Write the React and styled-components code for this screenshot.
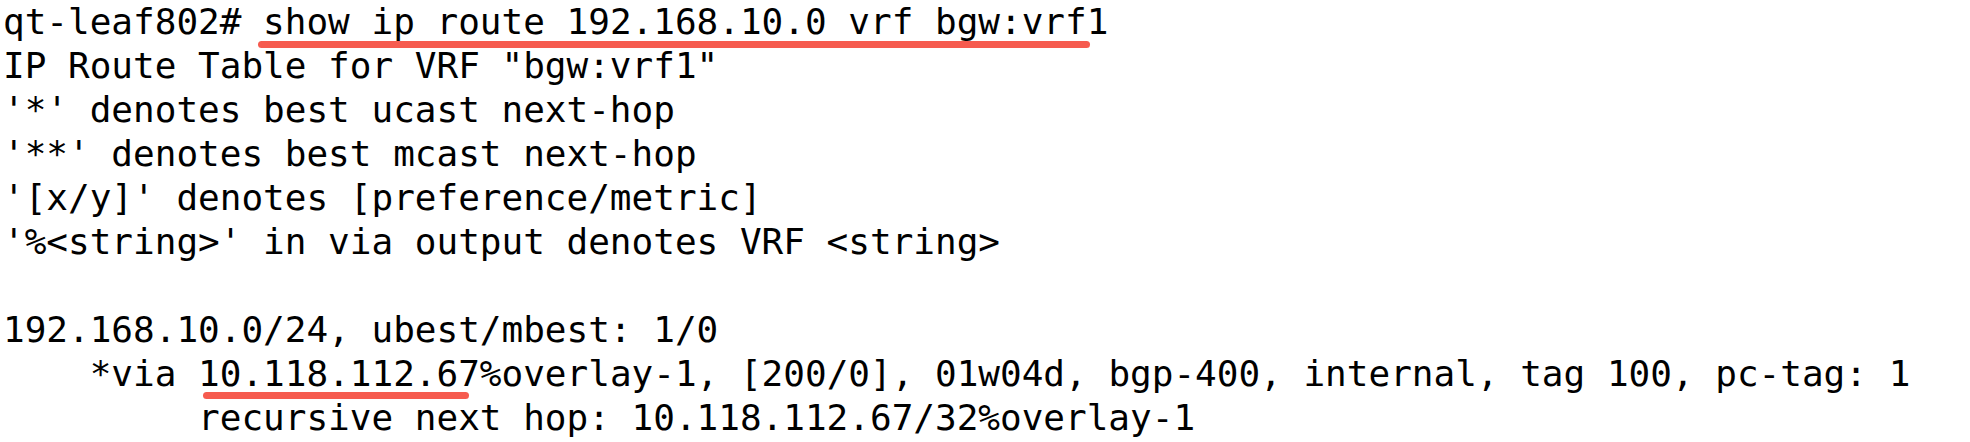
import React from "react";
import styled, {createGlobalStyle} from "styled-components";

const Global = createGlobalStyle`
  html, body {
    margin: 0;
    padding: 0;
    background: #ffffff;
  }
`;

const Terminal = styled.div`
  display: flex;
  flex-direction: column;
  padding: 0 0 0 3px;
  font-family: "DejaVu Sans Mono", "Liberation Mono", monospace;
  font-size: 36px;
  line-height: 44px;
  color: #000000;
  background: #ffffff;
`;

const Line = styled.div`
  height: 44px;
  white-space: pre;
`;

// hand-drawn red stroke under part of the output
const Marked = styled.span`
  position: relative;
  display: inline-block;
  &::after {
    content: "";
    position: absolute;
    left: ${({$left}) => $left}px;
    right: ${({$right}) => $right}px;
    top: ${({$top}) => $top}px;
    height: 7px;
    border-radius: 4px;
    background-color: #f65b4f;
  }
`;

const lines = [
  "IP Route Table for VRF \"bgw:vrf1\"",
  "'*' denotes best ucast next-hop",
  "'**' denotes best mcast next-hop",
  "'[x/y]' denotes [preference/metric]",
  "'%<string>' in via output denotes VRF <string>",
  "",
  "192.168.10.0/24, ubest/mbest: 1/0",
];

export default function App() {
  return (
    <>
      <Global/>
      <Terminal>
        <Line>
          qt-leaf802# <Marked $left={-5} $right={18} $top={41}>show ip route 192.168.10.0 vrf bgw:vrf1</Marked>
        </Line>
        { lines.map(
          (text, i) => <Line key={i}>{text}</Line>
        )}
        <Line>
          {"    *via "}<Marked $left={5} $right={11} $top={40}>10.118.112.67</Marked>%overlay-1, [200/0], 01w04d, bgp-400, internal, tag 100, pc-tag: 1
        </Line>
        <Line>{"         recursive next hop: 10.118.112.67/32%overlay-1"}</Line>
      </Terminal>
    </>
  );
}
